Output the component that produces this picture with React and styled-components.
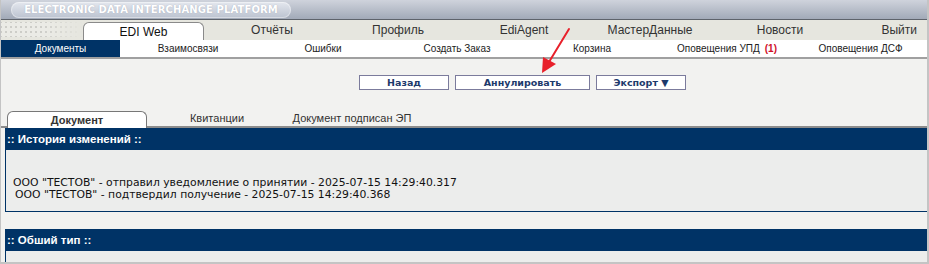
import React from "react";
import styled, { createGlobalStyle } from "styled-components";

const palette = {
  navy: "#003366",
  page: "#f2f2f0",
  panel: "#ecedec",
  navBg: "#e6e6df",
  frame: "#c4c4c4",
};

const Global = createGlobalStyle`
  html, body { margin: 0; padding: 0; background: ${palette.page}; }
  body { width: 929px; height: 264px; overflow: hidden; font-family: "Liberation Sans", Arial, sans-serif; }
`;

const Page = styled.div`
  position: relative;
  width: 929px;
  height: 264px;
  box-sizing: border-box;
  border-left: 1px solid ${palette.frame};
  border-right: 2px solid ${palette.frame};
  border-bottom: 2px solid ${palette.frame};
  background: ${palette.page};
  overflow: hidden;
`;

const Header = styled.div`
  height: 20px;
  display: flex;
  align-items: center;
  padding-left: 10px;
  background: linear-gradient(#cfd3dc, #a2aab8);
  border-bottom: 1px solid #5e636b;
  box-sizing: border-box;
`;

const Brand = styled.div`
  width: 280px;
  height: 16px;
  border-radius: 8px;
  background: linear-gradient(#e4e7ee, #bcc3d0);
  box-shadow: inset 0 0 0 1px rgba(255, 255, 255, 0.4);
  color: #fff;
  font-family: "DejaVu Sans", Verdana, sans-serif;
  font-size: 10px;
  font-weight: bold;
  letter-spacing: 0.1px;
  line-height: 16px;
  text-align: center;
  white-space: nowrap;
  text-shadow: 0 0 1px rgba(120, 130, 150, 0.6);
`;

const MainNav = styled.div`
  height: 20px;
  display: flex;
  align-items: flex-end;
  background: ${palette.navBg};
`;

const Dots = styled.div`
  flex-shrink: 0;
  width: 82px;
  height: 15px;
  margin-bottom: 3px;
  background-image:
    linear-gradient(90deg, transparent 0 1px, #ebebe6 1px 4px, transparent 4px),
    linear-gradient(transparent 0 1px, #ebebe6 1px 4px, transparent 4px);
  background-color: #cdcdc8;
  background-size: 5px 5px;
  -webkit-mask-image: linear-gradient(90deg, #000 50%, transparent);
  mask-image: linear-gradient(90deg, #000 50%, transparent);
`;

const NavItem = styled.div`
  flex-shrink: 0;
  width: ${(p) => p.w}px;
  height: ${(p) => (p.active ? 18 : 20)}px;
  display: flex;
  align-items: center;
  justify-content: ${(p) => (p.end ? "flex-end" : "center")};
  padding-right: ${(p) => (p.end ? 10 : 0)}px;
  box-sizing: border-box;
  white-space: nowrap;
  font-size: 12px;
  color: ${(p) => (p.active ? "#111" : "#333")};
  background: ${(p) => (p.active ? "#fff" : "transparent")};
  border: ${(p) => (p.active ? "1px solid #8a8a8a" : "none")};
  border-bottom: none;
  border-radius: ${(p) => (p.active ? "6px 6px 0 0" : "0")};
  margin-right: ${(p) => (p.active ? 5 : 0)}px;
`;

const SubNav = styled.div`
  height: 17px;
  display: flex;
  align-items: stretch;
  background: #fff;
  border-bottom: 2px solid #a0a0a0;
`;

const SubItem = styled.div`
  flex: ${(p) => (p.w ? `0 0 ${p.w}px` : "1 1 auto")};
  display: flex;
  align-items: center;
  justify-content: center;
  white-space: nowrap;
  font-size: 10px;
  color: ${(p) => (p.active ? "#fff" : "#222")};
  background: ${(p) => (p.active ? palette.navy : "transparent")};
`;

const Count = styled.span`
  color: #d0102a;
  font-weight: bold;
  margin-left: 5px;
`;

const Actions = styled.div`
  display: flex;
  gap: 6px;
  padding: 16px 0 0 358px;
  height: 15px;
`;

const Button = styled.div`
  flex-shrink: 0;
  width: ${(p) => p.w}px;
  height: 15px;
  box-sizing: border-box;
  border: 1px solid #7b7b9c;
  background: #fff;
  color: #1d3a6c;
  font-family: "DejaVu Sans", Verdana, sans-serif;
  font-size: 9.5px;
  font-weight: bold;
  line-height: 13px;
  text-align: center;
  white-space: nowrap;
`;

const DocTabs = styled.div`
  display: flex;
  align-items: flex-end;
  height: 17px;
  margin-top: 19px;
  padding-left: 6px;
  border-bottom: 2px solid #8c8c8c;
`;

const DocTab = styled.div`
  flex-shrink: 0;
  width: ${(p) => p.w}px;
  height: 17px;
  box-sizing: border-box;
  display: flex;
  align-items: center;
  justify-content: center;
  white-space: nowrap;
  font-size: 11px;
  font-weight: ${(p) => (p.active ? "bold" : "normal")};
  color: #333;
  background: ${(p) => (p.active ? "#fff" : "transparent")};
  border: ${(p) => (p.active ? "1px solid #777" : "none")};
  border-bottom: none;
  border-radius: 6px 6px 0 0;
  margin-bottom: ${(p) => (p.active ? -2 : 0)}px;
  position: relative;
  z-index: 1;
`;

const Section = styled.div`
  margin-left: 4px;
  margin-top: ${(p) => p.mt || 0}px;
`;

const SectionTitle = styled.div`
  height: 22px;
  background: ${palette.navy};
  color: #fff;
  font-size: 11.5px;
  font-weight: bold;
  line-height: 22px;
  padding-left: 2px;
  white-space: nowrap;
`;

const SectionBody = styled.div`
  height: ${(p) => p.h}px;
  box-sizing: border-box;
  background: ${palette.panel};
  border-left: 1px solid ${palette.navy};
  border-bottom: ${(p) => (p.open ? "none" : `1px solid ${palette.navy}`)};
  padding: 27px 0 0 7px;
  font-family: "DejaVu Sans", Verdana, sans-serif;
  font-size: 10.8px;
  color: #111;
`;

const HistoryLine = styled.div`
  height: 12px;
  line-height: 12px;
  white-space: nowrap;
  padding-left: ${(p) => p.indent || 0}px;
`;

const Pointer = styled.svg`
  position: absolute;
  left: 532px;
  top: 26px;
  pointer-events: none;
`;

const mainNav = [
  ["Отчёты", 126],
  ["Профиль", 126],
  ["EdiAgent", 126],
  ["МастерДанные", 126],
  ["Новости", 134],
];

const subNav = [
  ["Взаимосвязи", 136],
  ["Ошибки", 134],
  ["Создать Заказ", 134],
  ["Корзина", 136],
  ["Оповещения УПД", 134],
  ["Оповещения ДСФ", 0],
];

export default function App() {
  return (
    <>
      <Global />
      <Page>
        <Header>
          <Brand>ELECTRONIC DATA INTERCHANGE PLATFORM</Brand>
        </Header>
        <MainNav>
          <Dots />
          <NavItem w={121} active>EDI Web</NavItem>
          {mainNav.map(([label, w]) => (
            <NavItem key={label} w={w}>{label}</NavItem>
          ))}
          <NavItem w={80} end>Выйти</NavItem>
        </MainNav>
        <SubNav>
          <SubItem w={119} active>Документы</SubItem>
          {subNav.map(([label, w]) => (
            <SubItem key={label} w={w}>
              {label}
              {label === "Оповещения УПД" && <Count>(1)</Count>}
            </SubItem>
          ))}
        </SubNav>
        <Actions>
          <Button w={90}>Назад</Button>
          <Button w={135}>Аннулировать</Button>
          <Button w={90}>Экспорт ▼</Button>
        </Actions>
        <DocTabs>
          <DocTab w={140} active>Документ</DocTab>
          <DocTab w={140}>Квитанции</DocTab>
          <DocTab w={130}>Документ подписан ЭП</DocTab>
        </DocTabs>
        <Section>
          <SectionTitle>:: История изменений ::</SectionTitle>
          <SectionBody h={62}>
            <HistoryLine>ООО "ТЕСТОВ" - отправил уведомление о принятии - 2025-07-15 14:29:40.317</HistoryLine>
            <HistoryLine indent={2}>ООО "ТЕСТОВ" - подтвердил получение - 2025-07-15 14:29:40.368</HistoryLine>
          </SectionBody>
        </Section>
        <Section mt={17}>
          <SectionTitle>:: Обший тип ::</SectionTitle>
          <SectionBody h={20} open />
        </Section>
        <Pointer width="40" height="50" viewBox="0 0 40 50">
          <line x1="36" y1="3" x2="16" y2="36" stroke="#e8202a" strokeWidth="2" strokeLinecap="round" />
          <polygon points="9,47 10,31 23,38" fill="#e8202a" />
        </Pointer>
      </Page>
    </>
  );
}
